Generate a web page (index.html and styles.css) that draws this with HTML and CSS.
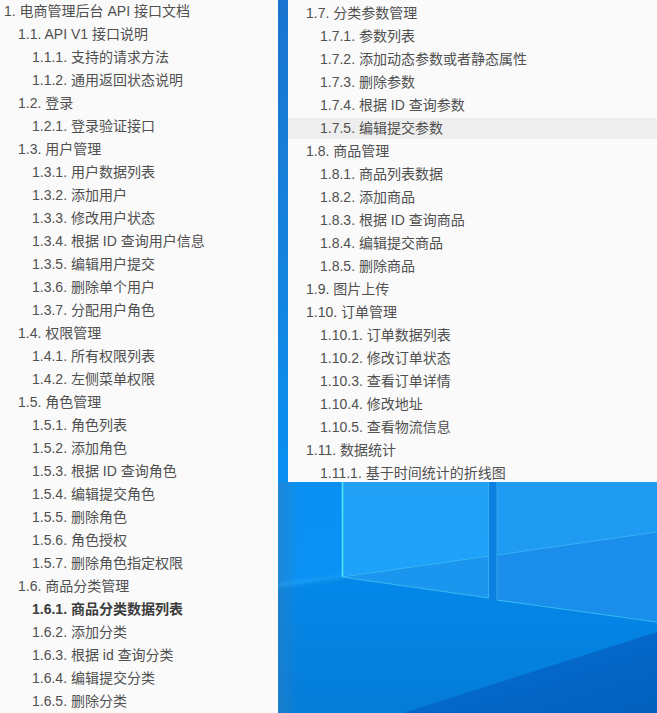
FILE: index.html
```html
<!DOCTYPE html>
<html lang="zh-CN">
<head>
<meta charset="utf-8">
<title>电商管理后台 API 接口文档</title>
<link rel="stylesheet" href="styles.css">
</head>
<body>
<svg class="wallpaper" width="657" height="713" viewBox="0 0 657 713" aria-hidden="true">
  <defs>
    <linearGradient id="base" x1="0" y1="0" x2="0" y2="1">
      <stop offset="0" stop-color="#1a74cf"/>
      <stop offset="0.35" stop-color="#1583dd"/>
      <stop offset="0.68" stop-color="#0a90f2"/>
      <stop offset="0.82" stop-color="#0a92f4"/>
    </linearGradient>
    <linearGradient id="floor" x1="0" y1="0" x2="0" y2="1">
      <stop offset="0" stop-color="#0488ea"/>
      <stop offset="1" stop-color="#047cd8"/>
    </linearGradient>
    <linearGradient id="dark" x1="0" y1="0" x2="1" y2="1">
      <stop offset="0" stop-color="#0570d6"/>
      <stop offset="1" stop-color="#0360bd"/>
    </linearGradient>
    <linearGradient id="edge" x1="0" y1="0" x2="1" y2="0">
      <stop offset="0" stop-color="#2a7fc0" stop-opacity=".55"/>
      <stop offset="1" stop-color="#2a7fc0" stop-opacity="0"/>
    </linearGradient>
    <linearGradient id="pane1" x1="0" y1="0" x2="0" y2="1">
      <stop offset="0" stop-color="#21a0f6"/>
      <stop offset="1" stop-color="#1ea2fa"/>
    </linearGradient>
    <filter id="glow" x="-50%" y="-50%" width="200%" height="200%">
      <feGaussianBlur stdDeviation="2"/>
    </filter>
  </defs>
  <rect width="657" height="713" fill="url(#base)"/>
  <polygon points="278,587 342,577 489,598 497,600 657,622 657,713 278,713" fill="url(#floor)"/>
  <polygon points="657,632 403,713 657,713" fill="url(#dark)"/>
  <rect x="489" y="482" width="8" height="118" fill="#0a80e0"/>
  <polygon points="342,482 489,482 489,556 342,577" fill="url(#pane1)"/>
  <polygon points="342,577 489,556 489,598" fill="#1b96ee"/>
  <polygon points="497,482 657,482 657,532 497,555" fill="#1f9bf2"/>
  <polygon points="497,555 657,532 657,621 497,600" fill="#1a8eea"/>
  <rect x="278" y="482" width="22" height="231" fill="url(#edge)"/>
  <line x1="278" y1="585" x2="342" y2="577" stroke="#3ab4f6" stroke-width="3" opacity=".45" filter="url(#glow)"/>
  <line x1="342.5" y1="482" x2="342.5" y2="577" stroke="#40e0f8" stroke-width="3" opacity=".5" filter="url(#glow)"/>
  <line x1="342" y1="577" x2="489" y2="556" stroke="#36b4f6" stroke-width="1"/>
  <line x1="497" y1="555" x2="657" y2="532" stroke="#36b0f6" stroke-width="1"/>
  <line x1="342.5" y1="482" x2="342.5" y2="577" stroke="#4fe6f5" stroke-width="1.6"/>
  <line x1="342" y1="577" x2="489" y2="598" stroke="#38b8f0" stroke-width="1.2"/>
  <line x1="497" y1="600" x2="657" y2="622" stroke="#38b8f0" stroke-width="1.2"/>
  <line x1="488.5" y1="482" x2="488.5" y2="598" stroke="#36aef0" stroke-width="1.2"/>
  <line x1="497" y1="482" x2="497" y2="600" stroke="#36a6ee" stroke-width="1"/>
</svg>
<main class="desktop">
  <nav class="panel panel-left">
    <ul class="toc">
      <li class="l0">1. 电商管理后台 API 接口文档</li>
      <li class="l1">1.1. API V1 接口说明</li>
      <li class="l2">1.1.1. 支持的请求方法</li>
      <li class="l2">1.1.2. 通用返回状态说明</li>
      <li class="l1">1.2. 登录</li>
      <li class="l2">1.2.1. 登录验证接口</li>
      <li class="l1">1.3. 用户管理</li>
      <li class="l2">1.3.1. 用户数据列表</li>
      <li class="l2">1.3.2. 添加用户</li>
      <li class="l2">1.3.3. 修改用户状态</li>
      <li class="l2">1.3.4. 根据 ID 查询用户信息</li>
      <li class="l2">1.3.5. 编辑用户提交</li>
      <li class="l2">1.3.6. 删除单个用户</li>
      <li class="l2">1.3.7. 分配用户角色</li>
      <li class="l1">1.4. 权限管理</li>
      <li class="l2">1.4.1. 所有权限列表</li>
      <li class="l2">1.4.2. 左侧菜单权限</li>
      <li class="l1">1.5. 角色管理</li>
      <li class="l2">1.5.1. 角色列表</li>
      <li class="l2">1.5.2. 添加角色</li>
      <li class="l2">1.5.3. 根据 ID 查询角色</li>
      <li class="l2">1.5.4. 编辑提交角色</li>
      <li class="l2">1.5.5. 删除角色</li>
      <li class="l2">1.5.6. 角色授权</li>
      <li class="l2">1.5.7. 删除角色指定权限</li>
      <li class="l1">1.6. 商品分类管理</li>
      <li class="l2 active">1.6.1. 商品分类数据列表</li>
      <li class="l2">1.6.2. 添加分类</li>
      <li class="l2">1.6.3. 根据 id 查询分类</li>
      <li class="l2">1.6.4. 编辑提交分类</li>
      <li class="l2">1.6.5. 删除分类</li>
    </ul>
  </nav>
  <nav class="panel panel-right">
    <ul class="toc toc-right">
      <li class="l1">1.7. 分类参数管理</li>
      <li class="l2">1.7.1. 参数列表</li>
      <li class="l2">1.7.2. 添加动态参数或者静态属性</li>
      <li class="l2">1.7.3. 删除参数</li>
      <li class="l2">1.7.4. 根据 ID 查询参数</li>
      <li class="l2 hover">1.7.5. 编辑提交参数</li>
      <li class="l1">1.8. 商品管理</li>
      <li class="l2">1.8.1. 商品列表数据</li>
      <li class="l2">1.8.2. 添加商品</li>
      <li class="l2">1.8.3. 根据 ID 查询商品</li>
      <li class="l2">1.8.4. 编辑提交商品</li>
      <li class="l2">1.8.5. 删除商品</li>
      <li class="l1">1.9. 图片上传</li>
      <li class="l1">1.10. 订单管理</li>
      <li class="l2">1.10.1. 订单数据列表</li>
      <li class="l2">1.10.2. 修改订单状态</li>
      <li class="l2">1.10.3. 查看订单详情</li>
      <li class="l2">1.10.4. 修改地址</li>
      <li class="l2">1.10.5. 查看物流信息</li>
      <li class="l1">1.11. 数据统计</li>
      <li class="l2">1.11.1. 基于时间统计的折线图</li>
    </ul>
  </nav>
</main>
</body>
</html>
```
FILE: styles.css
```css
html, body {
  margin: 0;
  padding: 0;
  height: 713px;
  overflow: hidden;
}
body {
  position: relative;
  font-family: "Liberation Sans", "Noto Sans CJK SC", sans-serif;
  font-size: 14px;
  color: #505050;
}
.wallpaper {
  position: absolute;
  top: 0;
  left: 0;
  display: block;
}
.desktop {
  position: relative;
  display: flex;
  gap: 10px;
  align-items: flex-start;
  height: 713px;
}
.panel {
  background: #fafafa;
  overflow: hidden;
}
.panel-left {
  width: 278px;
  height: 713px;
}
.panel-right {
  flex: 1;
  height: 482px;
}
.toc {
  list-style: none;
  margin: 0;
  padding: 1px 0 0;
}
.toc-right {
  padding-top: 3px;
}
.toc li {
  height: 21px;
  line-height: 21px;
  margin-bottom: 2px;
  white-space: nowrap;
}
.l0 { padding-left: 4px; }
.l1 { padding-left: 18px; }
.l2 { padding-left: 32px; }
.active { font-weight: 700; color: #3c3c3c; }
.hover { background: #eeeeee; }
```
